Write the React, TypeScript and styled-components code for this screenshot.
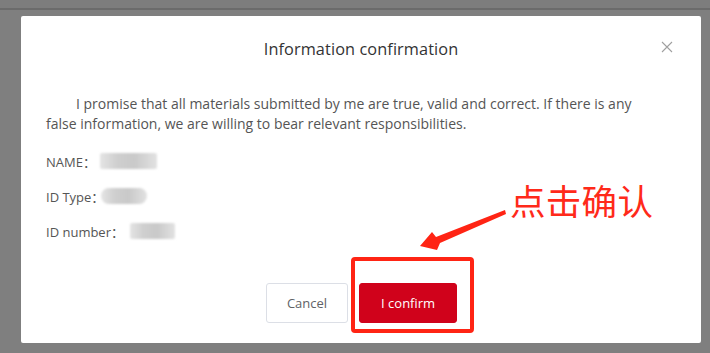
import React from 'react';
import styled, { createGlobalStyle } from 'styled-components';

const GlobalStyle = createGlobalStyle`
  html, body {
    margin: 0;
    padding: 0;
    width: 710px;
    height: 353px;
    overflow: hidden;
    background: #7f7f7f;
    font-family: 'Open Sans', 'Noto Sans CJK SC', sans-serif;
  }
`;

const Overlay = styled.div`
  position: relative;
  width: 710px;
  height: 353px;
  background: #7f7f7f;
  display: flex;
  flex-direction: column;
`;

const PageHeader = styled.div`
  height: 8px;
  border-bottom: 2px solid #6b6b6b;
  background: #7d7d7d;
`;

const Modal = styled.div`
  margin: 6px 0 0 21px;
  width: 680px;
  height: 327px;
  background: #fff;
  border-radius: 2px;
  display: flex;
  flex-direction: column;
  box-sizing: border-box;
  padding: 0 25px;
`;

const Header = styled.div`
  height: 64px;
  display: flex;
  align-items: center;
  justify-content: center;
  position: relative;
`;

const Title = styled.h2`
  margin: 0;
  padding-top: 2px;
  font-size: 16.3px;
  font-weight: 400;
  color: #333;
  letter-spacing: 0.1px;
`;

const Close = styled.button`
  position: absolute;
  right: 3px;
  top: 25px;
  width: 12px;
  height: 12px;
  border: none;
  padding: 0;
  background: transparent;
  display: flex;
`;

const Body = styled.div`
  display: flex;
  flex-direction: column;
  color: #555;
  font-size: 14px;
`;

const Statement = styled.p`
  margin: 14px 0 0;
  max-width: 600px;
  text-indent: 30px;
  line-height: 20px;
`;

const Fields = styled.div`
  display: flex;
  flex-direction: column;
  gap: 15px;
  margin-top: 17px;
`;

const Field = styled.div`
  display: flex;
  align-items: center;
  height: 20px;
  font-size: 13px;
`;

const Label = styled.span``;

const Blur = styled.span<{ $w: number; $offset: number; $round?: boolean }>`
  display: inline-block;
  margin-left: ${(p) => p.$offset}px;
  width: ${(p) => p.$w}px;
  height: 16px;
  border-radius: ${(p) => (p.$round ? '8px' : '2px')};
  background: linear-gradient(90deg, #e4e4e4 0%, #cfcfcf 30%, #c9c9c9 60%, #e2e2e2 100%);
  filter: blur(1px);
`;

const Footer = styled.div`
  margin-top: auto;
  margin-bottom: 20px;
  display: flex;
  justify-content: center;
  gap: 11px;
  padding-left: 1px;
`;

const Button = styled.button<{ $primary?: boolean }>`
  height: 40px;
  padding: 0 20px;
  min-width: ${(p) => (p.$primary ? '98px' : '81px')};
  border-radius: 3px;
  font-family: 'Open Sans', sans-serif;
  font-size: 13px;
  border: 1px solid ${(p) => (p.$primary ? '#d0021b' : '#dcdfe6')};
  background: ${(p) => (p.$primary ? '#d0021b' : '#fff')};
  color: ${(p) => (p.$primary ? '#fff' : '#606266')};
  position: relative;
`;

const Highlight = styled.span`
  position: absolute;
  left: -9px;
  top: -27px;
  width: 123px;
  height: 76px;
  box-sizing: border-box;
  border: 4px solid #ff2414;
  border-radius: 4px;
  pointer-events: none;
`;

const Annotation = styled.div`
  position: absolute;
  left: 510px;
  top: 177px;
  font-family: 'Noto Sans CJK SC', sans-serif;
  font-size: 35.5px;
  line-height: 46px;
  color: #ff2a1a;
  letter-spacing: 0.3px;
`;

const Arrow = styled.svg`
  position: absolute;
  left: 0;
  top: 0;
  pointer-events: none;
`;

export default function App() {
  return (
    <>
      <GlobalStyle />
      <Overlay>
        <PageHeader />
        <Modal>
          <Header>
            <Title>Information confirmation</Title>
            <Close aria-label="close">
              <svg width="12" height="12" viewBox="0 0 12 12">
                <path d="M1 1 L11 11 M11 1 L1 11" stroke="#a0a0a0" strokeWidth="1.1" />
              </svg>
            </Close>
          </Header>
          <Body>
            <Statement>
              I promise that all materials submitted by me are true, valid and correct. If there is any
              false information, we are willing to bear relevant responsibilities.
            </Statement>
            <Fields>
              <Field>
                <Label>NAME：</Label>
                <Blur $w={57} $offset={4} />
              </Field>
              <Field>
                <Label>ID Type：</Label>
                <Blur $w={46} $offset={-3} $round />
              </Field>
              <Field>
                <Label>ID number：</Label>
                <Blur $w={45} $offset={6} />
              </Field>
            </Fields>
          </Body>
          <Footer>
            <Button>Cancel</Button>
            <Button $primary>
              I confirm
              <Highlight />
            </Button>
          </Footer>
        </Modal>
        <Annotation>点击确认</Annotation>
        <Arrow width="710" height="353" viewBox="0 0 710 353">
          <polygon
            points="420,246 432,232 436,237 505,210 506,214 440,243 437,250"
            fill="#ff2414"
          />
        </Arrow>
      </Overlay>
    </>
  );
}
